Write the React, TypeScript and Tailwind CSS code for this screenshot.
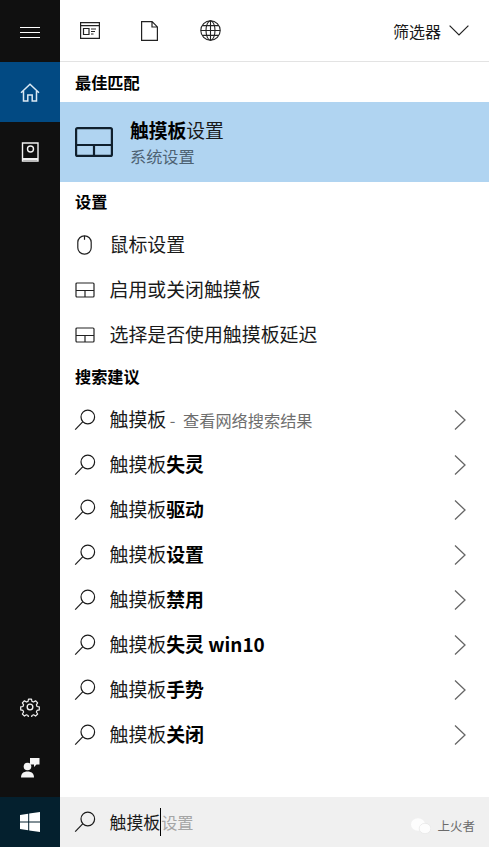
import React from 'react';

const font = { fontFamily: '"Noto Sans CJK SC", "Noto Sans", sans-serif' };

function SearchIcon() {
  return (
    <svg width="22" height="22" viewBox="0 0 22 22" fill="none" stroke="#1a1a1a" strokeWidth="1.2" className="flex-shrink-0">
      <circle cx="13.8" cy="8" r="6.8" />
      <path d="M8.9 12.7 1.2 20.6" />
    </svg>
  );
}

function Chevron() {
  return (
    <svg width="14" height="22" viewBox="0 0 14 22" fill="none" stroke="#666" strokeWidth="1.3">
      <path d="M2 1.5 12 11 2 20.5" />
    </svg>
  );
}

function PadIcon() {
  return (
    <svg width="20" height="16" viewBox="0 0 20 16" fill="none" stroke="#222" strokeWidth="1.2">
      <rect x="1" y="1" width="18" height="14" rx="1" />
      <path d="M1 8.5h18M10 8.5V15" />
    </svg>
  );
}

function SectionTitle({ children }: { children: React.ReactNode }) {
  return <div className="flex h-[40px] items-center pb-[2px] pl-[15px] text-[16.2px] font-bold text-black">{children}</div>;
}

function SettingRow({ icon, label }: { icon: React.ReactNode; label: string }) {
  return (
    <div className="flex h-[45px] items-center">
      <div className="flex w-[49.5px] justify-center">{icon}</div>
      <span className="text-[18.9px] text-[#1a1a1a]">{label}</span>
    </div>
  );
}

const suggestions = ['失灵', '驱动', '设置', '禁用', '失灵 win10', '手势', '关闭'];

function SuggestRow({ children }: { children: React.ReactNode }) {
  return (
    <div className="flex h-[45px] items-center pr-[22px]">
      <div className="flex w-[49.5px] justify-center">
        <SearchIcon />
      </div>
      <div className="flex-1 truncate text-[18.9px] text-[#1a1a1a]">{children}</div>
      <Chevron />
    </div>
  );
}

function Sidebar() {
  return (
    <div className="flex w-[60px] flex-shrink-0 flex-col bg-[#101010]">
      <div className="flex h-[62px] items-center justify-center pt-[2px]">
        <svg width="20" height="11" viewBox="0 0 20 11" stroke="#fff" strokeWidth="1">
          <path d="M0 .5h20M0 5.5h20M0 10.5h20" />
        </svg>
      </div>
      <div className="flex h-[60px] items-center justify-center bg-[#024a83]">
        <svg width="20" height="19" viewBox="0 0 20 19" fill="none" stroke="#dbe9f4" strokeWidth="1.5">
          <path d="M1 9.8 10 1.2l9 8.6M3.5 8v10h4.3v-6h4.4v6h4.3V8" />
        </svg>
      </div>
      <div className="flex h-[60px] items-center justify-center">
        <svg width="18" height="21" viewBox="0 0 18 21" fill="none" stroke="#f2f2f2" strokeWidth="1.4">
          <path d="M1.5 1h15.5v18H1.5z" />
          <circle cx="9.5" cy="7" r="3" />
          <path d="M1.5 17h15.5" strokeWidth="2" />
        </svg>
      </div>
      <div className="flex-1" />
      <div className="flex h-[60px] items-center justify-center">
        <svg width="20" height="20" viewBox="0 0 24 24" fill="none" stroke="#f2f2f2" strokeWidth="1.6" strokeLinejoin="round">
          <circle cx="12" cy="12" r="3.4" />
          <path d="M10 1.5h4l.6 3 2.2.9 2.6-1.7 2.8 2.8-1.7 2.6.9 2.2 3 .6v4l-3 .6-.9 2.2 1.7 2.6-2.8 2.8-2.6-1.7-2.2.9-.6 3h-4l-.6-3-2.2-.9-2.6 1.7-2.8-2.8 1.7-2.6-.9-2.2-3-.6v-4l3-.6.9-2.2-1.7-2.6 2.8-2.8 2.6 1.7 2.2-.9z" transform="translate(1.2 1.2) scale(.9)" />
        </svg>
      </div>
      <div className="flex h-[60px] items-center justify-center">
        <svg width="20" height="21" viewBox="0 0 20 21" fill="#f5f5f5">
          <circle cx="7.5" cy="9.5" r="3.8" />
          <path d="M1 20.5c0-4 2.5-6 6.5-6s6.5 2 6.5 6z" />
          <path d="M10 1h9.5v6.5h-3l-2.5 2.5V7.5h-4z" />
        </svg>
      </div>
      <div className="flex h-[50px] items-center justify-center bg-[#04202e]">
        <svg width="20" height="20" viewBox="0 0 20 20" fill="#fff">
          <path d="M0 2.9 8.2 1.8v7.7H0zM9.2 1.6 20 0v9.5H9.2zM0 10.5h8.2v7.7L0 17.1zM9.2 10.5H20V20L9.2 18.4z" />
        </svg>
      </div>
    </div>
  );
}

export default function App() {
  return (
    <div className="relative flex h-[847px] w-[489px] overflow-hidden bg-white" style={font}>
      <Sidebar />
      <div className="flex min-w-0 flex-1 flex-col">
        <div className="flex h-[62px] flex-shrink-0 items-center border-b border-[#e3e3e3] pl-[20px] pr-[20px]">
          <svg width="20" height="17" viewBox="0 0 20 17" fill="none" stroke="#222" strokeWidth="1.2">
            <path d="M.6.6h18.8v15.8H.6zM.6 3.6h18.8" />
            <path d="M3.5 6.5h5.5v6H3.5zM11 7h5M11 9.5h4M11 12h2.5" />
          </svg>
          <svg width="17" height="20" viewBox="0 0 17 20" fill="none" stroke="#222" strokeWidth="1.2" className="ml-[41px]">
            <path d="M.6.6h10.5l5.3 5.3v13.5H.6zM11 .6v5.4h5.4" />
          </svg>
          <svg width="21" height="21" viewBox="0 0 21 21" fill="none" stroke="#222" strokeWidth="1.1" className="ml-[42px]">
            <circle cx="10.5" cy="10.5" r="9.7" />
            <ellipse cx="10.5" cy="10.5" rx="4.5" ry="9.7" />
            <path d="M10.5.8v19.4M.8 10.5h19.4M2.2 5.6h16.6M2.2 15.4h16.6" />
          </svg>
          <div className="flex-1" />
          <span className="text-[16px] text-[#1a1a1a]">筛选器</span>
          <svg width="20" height="11" viewBox="0 0 20 11" fill="none" stroke="#222" strokeWidth="1.2" className="ml-[8px]">
            <path d="M.6.6 10 10 19.4.6" />
          </svg>
        </div>

        <div className="flex h-[40px] items-center pl-[15px] text-[16.2px] font-bold text-black">最佳匹配</div>

        <div className="flex h-[80px] flex-shrink-0 items-center bg-[#b0d4f1] pl-[15px]">
          <svg width="38" height="30" viewBox="0 0 38 30" fill="none" stroke="#10202e" strokeWidth="2.2">
            <rect x="1.1" y="1.1" width="35.8" height="27.8" rx="1.5" />
            <path d="M1.1 18h35.8M19 18v11" />
          </svg>
          <div className="ml-[17px] flex flex-col">
            <div className="text-[18.8px] leading-[28px] text-[#1a1a1a]">
              <span className="font-bold text-black">触摸板</span>设置
            </div>
            <div className="text-[16.2px] leading-[24px] text-[#4d6273]">系统设置</div>
          </div>
        </div>

        <SectionTitle>设置</SectionTitle>

        <SettingRow
          icon={
            <svg width="15" height="20" viewBox="0 0 15 20" fill="none" stroke="#222" strokeWidth="1.2">
              <rect x=".8" y=".8" width="13.4" height="18.4" rx="6.5" />
              <path d="M7.5 .8v4" />
            </svg>
          }
          label="鼠标设置"
        />
        <SettingRow icon={<PadIcon />} label="启用或关闭触摸板" />
        <SettingRow icon={<PadIcon />} label="选择是否使用触摸板延迟" />

        <SectionTitle>搜索建议</SectionTitle>

        <SuggestRow>
          触摸板
          <span className="text-[16.2px] text-[#6e6e6e]">
            {' '}
            - <span className="ml-[4px]">查看网络搜索结果</span>
          </span>
        </SuggestRow>
        {suggestions.map((s) => (
          <SuggestRow key={s}>
            触摸板<span className="font-bold text-black">{s}</span>
          </SuggestRow>
        ))}

        <div className="flex-1" />

        <div className="flex h-[50px] flex-shrink-0 items-center bg-[#f0f0f0]">
          <div className="flex w-[49.5px] justify-center">
            <SearchIcon />
          </div>
          <span className="text-[16.9px] text-[#1a1a1a]">触摸板</span>
          <span className="h-[28px] w-[1px] bg-black" />
          <span className="text-[16.2px] text-[#a5a5a5]">设置</span>
        </div>
      </div>

      {/* watermark */}
      <div className="absolute bottom-[13px] right-[14px] flex items-center gap-[6px]">
        <svg width="20" height="16" viewBox="0 0 20 16" fill="#fdfdfd">
          <ellipse cx="7" cy="6.5" rx="7" ry="6.2" />
          <ellipse cx="14" cy="10.5" rx="5.8" ry="5.2" stroke="#e2e2e2" strokeWidth=".6" />
        </svg>
        <span className="text-[12.5px] leading-[16px] text-[#6b6b6b]">上火者</span>
      </div>
    </div>
  );
}
